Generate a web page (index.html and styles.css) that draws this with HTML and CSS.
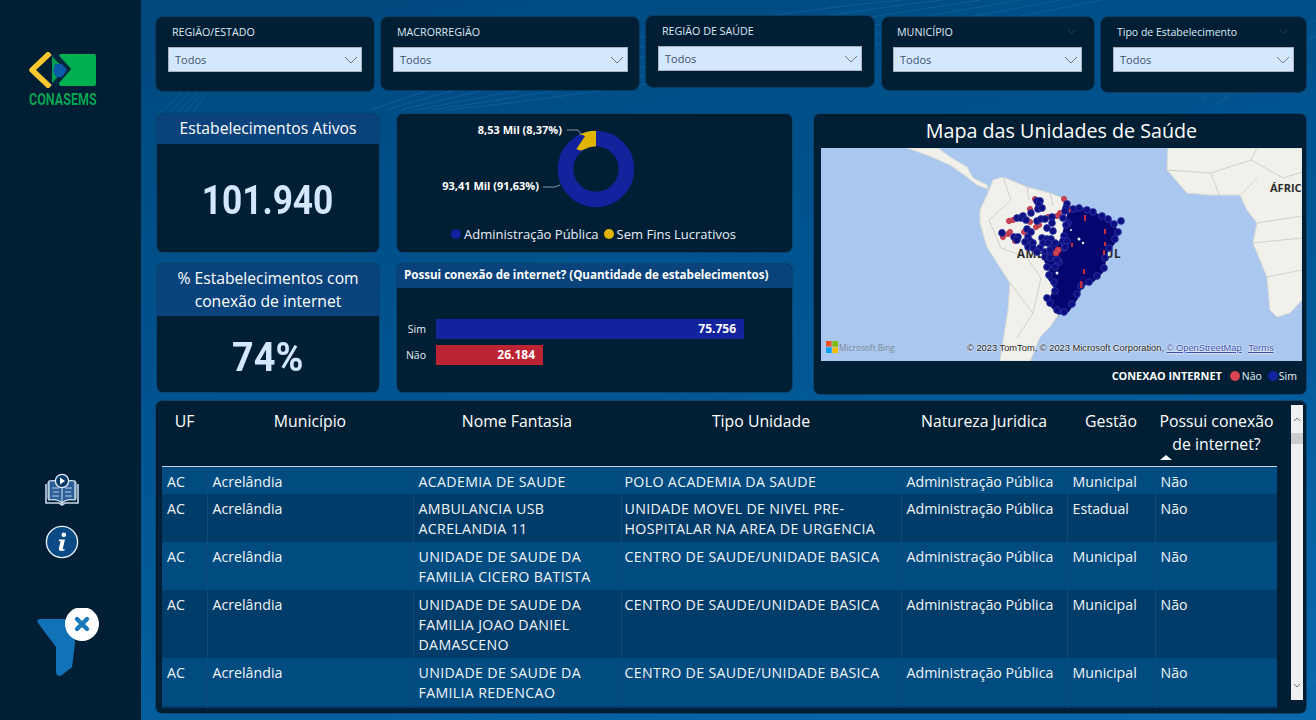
FILE: index.html
```html
<!DOCTYPE html>
<html lang="pt-BR">
<head>
<meta charset="utf-8">
<title>Painel CONASEMS</title>
<link rel="stylesheet" href="styles.css">
</head>
<body>
<svg class="defs" width="0" height="0" aria-hidden="true">
  <symbol id="chev" viewBox="0 0 14 8"><path d="M1 1l6 6 6-6" fill="none" stroke="currentColor" stroke-width="1"/></symbol>
</svg>
<div class="page">
  <aside class="side">
    <div class="logo">
      <svg class="logo-mark" width="68" height="36" viewBox="0 0 68 36">
        <path d="M30 4a2 2 0 0 1 2-2h33a2 2 0 0 1 2 2v28a2 2 0 0 1-2 2H32a2 2 0 0 1-2-2z" fill="#00b050"/>
        <path d="M21 1 3 18l18 17" fill="none" stroke="#fdc82f" stroke-width="5.500" stroke-linejoin="round"/>
        <path d="M23 4v29l14-14z" fill="#00a050"/>
        <path d="M24 1 39 17 24 34" fill="none" stroke="#00263f" stroke-width="5"/>
        <path d="M26 12l7 0 5 6-5 7-6 0-3-6z" fill="#0b5aa8"/>
      </svg>
      <div class="logo-name">CONASEMS</div>
    </div>
    <div class="side-actions">
      <svg width="34" height="34" viewBox="0 0 34 34">
        <path d="M3 9h7v17H3z M31 9h-7v17h7z" fill="#3a70a8" stroke="#c8d8ea" stroke-width="1"/>
        <path d="M1 11v19h13l3 2 3-2h13V11" fill="none" stroke="#c8d8ea" stroke-width="1.600"/>
        <path d="M4 8c5-1 10 0 13 3 3-3 8-4 13-3v19c-5-1-10 0-13 3-3-3-8-4-13-3z" fill="#2c5f98" stroke="#dbe7f3" stroke-width="1.200"/>
        <path d="M17 13v18" stroke="#dbe7f3" stroke-width="1"/>
        <path d="M7 15h7M8 19h6M7 23h7M20 15h7M20 19h6M20 23h7" stroke="#b9d0e8" stroke-width="1.200"/>
        <circle cx="17" cy="8" r="6.600" fill="#0a3a68" stroke="#e6eef7" stroke-width="1.300"/>
        <path d="M15 4.600l5 3.400-5 3.400z" fill="#fff"/>
      </svg>
      <svg class="info" width="34" height="34" viewBox="0 0 34 34">
        <circle cx="17" cy="17" r="15.600" fill="#0a4a86" stroke="#e8eef5" stroke-width="1.400"/>
        <circle cx="18.800" cy="9.800" r="2.300" fill="#fff"/>
        <path d="M14 14.500h6l-2.200 9c-.1.7.5.9 2 .4l-.2 1.300c-2.400 1.200-6.200 1.200-5.700-1.700l1.600-7.200-1.700-.4z" fill="#fff"/>
      </svg>
    </div>
    <div class="clear">
      <svg width="62" height="70" viewBox="0 0 62 70">
        <path d="M3 11H36L38 35 35 59 25 67Q21 70 19 65V39L1 15Q-1 11 3 11Z" fill="#1272b8"/>
        <circle cx="45" cy="16" r="17" fill="#fff"/>
        <path d="M40 11l10 10M50 11 40 21" stroke="#1a78bd" stroke-width="4.400" stroke-linecap="round"/>
      </svg>
    </div>
  </aside>

  <main class="main">
    <svg class="swirl" width="1175" height="720" viewBox="0 0 1175 720" aria-hidden="true">
      <g fill="none" stroke="#4c93c9" stroke-opacity=".22">
        <path d="M230 110C380 55 560 20 760 0"/><path d="M245 110C400 62 580 28 800 0"/>
        <path d="M260 110C420 70 600 36 840 0"/><path d="M275 110C440 78 620 44 880 0"/>
        <path d="M290 110C460 85 640 52 920 0"/><path d="M305 110C480 92 660 60 960 0"/>
        <path d="M1060 100C1100 70 1140 40 1175 20"/><path d="M1075 105C1110 78 1145 52 1175 36"/>
        <path d="M1120 720C1140 700 1160 690 1175 680"/>
        <path d="M20 112 42 92M28 112 50 92M36 112 58 92M44 112 62 93M52 112 66 93"/>
      </g>
    </svg>

    <section class="filters">
      <div class="filter f1"><div class="f-head"><span>REGIÃO/ESTADO</span></div><div class="select"><span>Todos</span><svg class="c-sel"><use href="#chev"/></svg></div></div>
      <div class="filter f2"><div class="f-head"><span>MACRORREGIÃO</span></div><div class="select"><span>Todos</span><svg class="c-sel"><use href="#chev"/></svg></div></div>
      <div class="filter f3"><div class="f-head"><span>REGIÃO DE SAÚDE</span></div><div class="select"><span>Todos</span><svg class="c-sel"><use href="#chev"/></svg></div></div>
      <div class="filter f4"><div class="f-head"><span>MUNICÍPIO</span><svg class="c-head"><use href="#chev"/></svg></div><div class="select"><span>Todos</span><svg class="c-sel"><use href="#chev"/></svg></div></div>
      <div class="filter f5"><div class="f-head"><span>Tipo de Estabelecimento</span><svg class="c-head"><use href="#chev"/></svg></div><div class="select"><span>Todos</span><svg class="c-sel"><use href="#chev"/></svg></div></div>
    </section>

    <section class="mid">
      <div class="card kpi">
        <h2 class="band">Estabelecimentos Ativos</h2>
        <div class="kpi-val"><span>101.940</span></div>
      </div>
      <div class="card donut">
        <svg class="donut-svg" width="397" height="105" viewBox="0 0 397 105">
          <circle cx="200" cy="55" r="30.500" fill="none" stroke="#12239e" stroke-width="15.500"/>
          <circle class="slice" cx="200" cy="55" r="30.500" pathLength="100" stroke-dasharray="8.370 91.630" fill="none" stroke="#e0b400" stroke-width="15.500" transform="rotate(-120.100 200 55)"/>
          <path d="M171 16h11l3 4M147 73h12l5-2" fill="none" stroke="#8a949e" stroke-width="1"/>
          <text class="dl" x="166" y="20" text-anchor="end">8,53 Mil (8,37%)</text>
          <text class="dl" x="143" y="76" text-anchor="end">93,41 Mil (91,63%)</text>
        </svg>
        <div class="donut-legend">
          <span class="dot dot-blue"></span><span>Administração Pública</span>
          <span class="dot dot-yellow"></span><span>Sem Fins Lucrativos</span>
        </div>
      </div>
      <div class="card map-card">
        <h2 class="map-title">Mapa das Unidades de Saúde</h2>
        <div class="map">
          <svg width="481" height="213" viewBox="0 0 481 213">
            <rect width="481" height="213" fill="#a9c7ef"/>
            <g fill="#f1f0ea" stroke="#dcdcd4" stroke-width="1">
              <path d="M86 0 106 7 129 17 146 29 156 37 167 41 166 37 152 30 146 19 129 9 117 0Z"/>
              <path d="M159 62 167 45 172 32 182 29 206 39 229 45 246 52 259 65 286 72 296 82 292 94 284 119 269 132 257 140 254 150 242 164 237 165 226 155 237 167 229 179 219 189 209 213H179L187 162 189 135 166 99 159 75Z"/>
              <path d="M347 0 346 22 366 45 389 47 419 47 426 62 436 75 432 95 446 129 449 162 456 169 469 165 481 152V0Z"/>
            </g>
            <g fill="none" stroke="#c8c8c0" stroke-width=".8">
              <path d="M182 29 190 52 168 72M206 39 208 52M229 45 232 58M168 72 180 100 206 110 220 130 212 165 196 190M189 135 212 165"/>
              <path d="M346 22 390 25 430 12 436 0M390 25 398 47M430 12 462 30 481 24M436 75 481 68M432 95 481 90M446 129 481 122M420 47 436 30"/>
            </g>
            <text class="m-lab" x="196" y="110">AMÉRICA DO SUL</text>
            <text class="m-lab m-af" x="449" y="44">ÁFRIC</text>
            <path d="M249 65 262 62 276 68 289 74 295 84 292 94 284 104 281 122 271 132 259 137 255 149 246 162 238 164 229 154 236 140 228 128 233 118 242 108 246 96 244 85Z" fill="#04056e" stroke="#04056e" stroke-width="5" stroke-linejoin="round"/>
            <path d="M223 109 230 98 249 90 252 119 231 126Z" fill="#04056e" stroke="#04056e" stroke-width="3" stroke-linejoin="round"/>
            <g class="blue">
              <circle cx="252" cy="61" r="3"/><circle cx="258" cy="60" r="3"/><circle cx="266" cy="62" r="3"/><circle cx="272" cy="64" r="3"/><circle cx="281" cy="68" r="3"/><circle cx="287" cy="71" r="3"/><circle cx="293" cy="76" r="3"/><circle cx="297" cy="84" r="3"/><circle cx="294" cy="91" r="3"/><circle cx="288" cy="100" r="3"/><circle cx="284" cy="110" r="3"/><circle cx="283" cy="120" r="3"/><circle cx="276" cy="128" r="3"/><circle cx="268" cy="134" r="3"/><circle cx="260" cy="138" r="3"/><circle cx="256" cy="146" r="3"/><circle cx="251" cy="156" r="3"/><circle cx="243" cy="164" r="3"/><circle cx="236" cy="162" r="3"/><circle cx="229" cy="155" r="3"/><circle cx="226" cy="150" r="3"/><circle cx="234" cy="143" r="3"/><circle cx="233" cy="134" r="3"/><circle cx="228" cy="127" r="3"/><circle cx="238" cy="114" r="3"/><circle cx="243" cy="100" r="3"/><circle cx="243" cy="88" r="3"/><circle cx="247" cy="75" r="3"/>
            </g>
            <g fill="#c62c3c">
              <rect x="263" y="67" width="2" height="6"/><rect x="283" y="81" width="2" height="5"/><rect x="262" y="121" width="2" height="5"/><rect x="259" y="133" width="2.500" height="7"/><rect x="283" y="94" width="2" height="4"/><rect x="250" y="95" width="2" height="4"/><rect x="282" y="102" width="2" height="5"/>
            </g>
            <g fill="#f1f0ea"><circle cx="258" cy="91" r="1.500"/><circle cx="262" cy="95" r="1.200"/><circle cx="236" cy="125" r="1.500"/><circle cx="250" cy="82" r="1"/></g>
            <g class="red">
              <circle cx="188" cy="73" r="2.500"/><circle cx="192" cy="72" r="2.500"/><circle cx="214" cy="51" r="2.500"/><circle cx="243" cy="51" r="2.500"/><circle cx="209" cy="61" r="2.500"/><circle cx="206" cy="72" r="2.500"/><circle cx="209" cy="74" r="2.500"/><circle cx="215" cy="79" r="2.500"/><circle cx="218" cy="77" r="2.500"/><circle cx="181" cy="84" r="2.500"/><circle cx="182" cy="89" r="2.500"/><circle cx="187" cy="86" r="2.500"/><circle cx="189" cy="84" r="2.500"/><circle cx="194" cy="93" r="2.500"/><circle cx="203" cy="84" r="2.500"/><circle cx="237" cy="102" r="3"/><circle cx="235" cy="105" r="3"/><circle cx="239" cy="65" r="2.500"/><circle cx="227" cy="69" r="2.500"/><circle cx="236" cy="68" r="2.500"/><circle cx="247" cy="62" r="2.500"/>
            </g>
            <g class="blue">
              <circle cx="181" cy="85" r="3"/><circle cx="196" cy="70" r="3"/><circle cx="200" cy="70" r="3"/><circle cx="202" cy="68" r="3"/><circle cx="205" cy="72" r="3"/><circle cx="210" cy="65" r="3"/><circle cx="216" cy="53" r="3"/><circle cx="219" cy="53" r="3"/><circle cx="218" cy="57" r="3"/><circle cx="217" cy="61" r="3"/><circle cx="221" cy="60" r="3"/><circle cx="246" cy="56" r="3"/><circle cx="245" cy="60" r="3"/><circle cx="244" cy="63" r="3"/><circle cx="216" cy="73" r="3"/><circle cx="220" cy="71" r="3"/><circle cx="224" cy="71" r="3"/><circle cx="231" cy="69" r="3"/><circle cx="231" cy="75" r="3"/><circle cx="226" cy="80" r="3"/><circle cx="232" cy="83" r="2.500"/><circle cx="206" cy="81" r="3"/><circle cx="210" cy="84" r="3"/><circle cx="193" cy="89" r="3"/><circle cx="197" cy="89" r="3"/><circle cx="196" cy="92" r="3"/><circle cx="207" cy="89" r="3"/><circle cx="209" cy="93" r="3"/><circle cx="204" cy="94" r="3"/><circle cx="212" cy="95" r="3"/><circle cx="207" cy="99" r="3"/><circle cx="221" cy="90" r="3"/><circle cx="226" cy="91" r="3"/><circle cx="230" cy="91" r="3"/><circle cx="222" cy="95" r="3"/><circle cx="227" cy="95" r="3"/><circle cx="234" cy="95" r="3"/><circle cx="219" cy="100" r="3"/><circle cx="224" cy="104" r="3"/><circle cx="229" cy="102" r="3"/><circle cx="224" cy="109" r="3"/><circle cx="229" cy="110" r="3"/><circle cx="236" cy="112" r="3"/><circle cx="226" cy="119" r="3"/><circle cx="234" cy="119" r="3"/><circle cx="242" cy="93" r="3"/><circle cx="246" cy="93" r="3"/><circle cx="244" cy="99" r="3"/><circle cx="300" cy="73" r="2.500"/><circle cx="242" cy="70" r="3"/><circle cx="245" cy="77" r="3"/><circle cx="212" cy="100" r="3"/><circle cx="216" cy="104" r="3"/>
            </g>
          </svg>
          <div class="bing"><svg width="12" height="12" viewBox="0 0 12 12"><rect width="5.600" height="5.600" fill="#f25022"/><rect x="6.400" width="5.600" height="5.600" fill="#7fba00"/><rect y="6.400" width="5.600" height="5.600" fill="#00a4ef"/><rect x="6.400" y="6.400" width="5.600" height="5.600" fill="#ffb900"/></svg><span>Microsoft Bing</span></div>
          <div class="attr">© 2023 TomTom, © 2023 Microsoft Corporation, <u>© OpenStreetMap</u> <u class="terms">Terms</u></div>
        </div>
        <div class="map-legend">
          <b>CONEXAO INTERNET</b>
          <span class="dot dot-red"></span><span>Não</span>
          <span class="dot dot-blue"></span><span>Sim</span>
        </div>
      </div>
      <div class="card kpi kpi2">
        <h2 class="band">% Estabelecimentos com conexão de internet</h2>
        <div class="kpi-val"><span>74%</span></div>
      </div>
      <div class="card bars">
        <h3 class="bars-title">Possui conexão de internet? (Quantidade de estabelecimentos)</h3>
        <div class="bars-body">
          <div class="bar-row"><span class="bar-lab">Sim</span><div class="bar bar-blue" style="width:308px">75.756</div></div>
          <div class="bar-row"><span class="bar-lab">Não</span><div class="bar bar-red" style="width:107px">26.184</div></div>
        </div>
      </div>
    </section>

    <section class="card tbl-card">
      <div class="tbl-wrap">
        <table>
          <colgroup><col class="c1"><col class="c2"><col class="c3"><col class="c4"><col class="c5"><col class="c6"><col class="c7"></colgroup>
          <thead>
            <tr><th>UF</th><th>Município</th><th>Nome Fantasia</th><th>Tipo Unidade</th><th>Natureza Juridica</th><th>Gestão</th><th class="sorted">Possui conexão de internet?<i class="sort"></i></th></tr>
          </thead>
          <tbody>
            <tr class="r27"><td>AC</td><td>Acrelândia</td><td class="up">ACADEMIA DE SAUDE</td><td class="up">POLO ACADEMIA DA SAUDE</td><td>Administração Pública</td><td>Municipal</td><td>Não</td></tr>
            <tr><td>AC</td><td>Acrelândia</td><td class="up">AMBULANCIA USB ACRELANDIA 11</td><td class="up">UNIDADE MOVEL DE NIVEL PRE-HOSPITALAR NA AREA DE URGENCIA</td><td>Administração Pública</td><td>Estadual</td><td>Não</td></tr>
            <tr><td>AC</td><td>Acrelândia</td><td class="up">UNIDADE DE SAUDE DA FAMILIA CICERO BATISTA</td><td class="up">CENTRO DE SAUDE/UNIDADE BASICA</td><td>Administração Pública</td><td>Municipal</td><td>Não</td></tr>
            <tr><td>AC</td><td>Acrelândia</td><td class="up">UNIDADE DE SAUDE DA FAMILIA JOAO DANIEL DAMASCENO</td><td class="up">CENTRO DE SAUDE/UNIDADE BASICA</td><td>Administração Pública</td><td>Municipal</td><td>Não</td></tr>
            <tr><td>AC</td><td>Acrelândia</td><td class="up">UNIDADE DE SAUDE DA FAMILIA REDENCAO</td><td class="up">CENTRO DE SAUDE/UNIDADE BASICA</td><td>Administração Pública</td><td>Municipal</td><td>Não</td></tr>
            <tr class="sliver"><td></td><td></td><td></td><td></td><td></td><td></td><td></td></tr>
          </tbody>
        </table>
      </div>
      <div class="scroll">
        <svg class="sc-arrow" width="8" height="5" viewBox="0 0 8 5"><path d="M1 4l3-3 3 3" fill="none" stroke="#777" stroke-width="1"/></svg>
        <div class="thumb"></div>
        <svg class="sc-arrow sc-down" width="8" height="5" viewBox="0 0 8 5"><path d="M1 1l3 3 3-3" fill="none" stroke="#777" stroke-width="1"/></svg>
      </div>
    </section>
  </main>
</div>
</body>
</html>
```

FILE: styles.css
```css
* { box-sizing: border-box; }
html, body { margin: 0; padding: 0; height: 720px; overflow: hidden; }
body { font-family: "Open Sans", "Noto Sans", sans-serif; color: #fff; background: #002038; }
h2, h3 { margin: 0; font-weight: 400; }
.defs { position: absolute; }

.page { display: flex; width: 1316px; height: 720px; }

/* sidebar */
.side { width: 141px; flex: none; background: #001f35; display: flex; flex-direction: column; align-items: flex-start; }
.logo { margin: 52px 0 0 29px; }
.logo-mark { display: block; }
.logo-name { font-family: "Roboto", sans-serif; font-weight: 700; font-size: 16.500px; line-height: 17px; color: #00a651; margin-top: 3px; white-space: nowrap; transform: scaleX(.76); transform-origin: left center; }
.side-actions { display: flex; flex-direction: column; gap: 18px; margin: 365px 0 0 45px; }
.side-actions svg { display: block; }
.clear { margin: 49px 0 0 37px; }
.clear svg { display: block; }

/* main */
.main { position: relative; flex: 1; min-width: 0; padding: 16px 9px 0 14px; background: linear-gradient(165deg, #00487d 0%, #005591 45%, #0a68ad 100%); }
.swirl { position: absolute; left: 0; top: 0; pointer-events: none; }
.filters, .mid, .tbl-card { position: relative; }

.filters { display: flex; align-items: flex-start; gap: 5px; height: 77px; }
.filter { background: #001f35; border-radius: 8px; border: 1px solid #0a3d66; padding: 0 12px; font-size: 10.700px; }
.f-head { display: flex; justify-content: space-between; align-items: center; height: 30px; padding: 0 4px 1px; color: #dfeaf5; }
.select { display: flex; justify-content: space-between; align-items: center; height: 25px; background: #d3e8fd; border: 1px solid #a9b2bd; padding: 0 3px 0 6px; color: #3f5270; font-size: 11px; }
.c-sel { width: 14px; height: 8px; color: #68788e; }
.c-head { width: 9px; height: 5px; margin-right: 2px; color: #44566a; }
.f1 { width: 220px; height: 76px; }
.f2 { width: 260px; height: 75px; padding-right: 11px; }
.f3 { width: 230px; height: 73px; margin-top: -1px; }
.f4 { width: 214px; height: 75px; margin-left: 1px; padding-left: 11px; }
.f5 { width: 207px; height: 77px; font-size: 10.500px; }

.mid { display: grid; grid-template-columns: 224px 397px 498px; grid-template-rows: 140px 132px; column-gap: 16px; row-gap: 10px; margin: 20px 0 0 1px; width: 1151px; }
.card { background: #001f35; border: 1px solid #0c4470; border-radius: 7px; overflow: hidden; }

/* KPI */
.kpi { display: flex; flex-direction: column; }
.band { background: #0a437c; color: #fff; font-size: 15.700px; line-height: 23px; text-align: center; padding: 3px 8px 4px; }
.kpi-val { flex: 1; display: flex; align-items: center; justify-content: center; padding-top: 4px; font-family: "Roboto", sans-serif; font-weight: 700; font-size: 41px; color: #d3e8fd; }
.kpi-val span { display: block; transform: scaleX(.86); }
.kpi2 { height: 130px; }
.kpi2 .band { padding: 3px 20px 3px; }
.kpi2 .kpi-val { padding-top: 6px; }
.kpi2 .kpi-val span { transform: scaleX(.92); }

/* donut */
.donut { display: flex; flex-direction: column; }
.donut-svg { display: block; margin-left: -1px; }
.dl { font-size: 11px; font-weight: 700; fill: #fff; }
.donut-legend { display: flex; justify-content: center; align-items: center; font-size: 13px; color: #e8f0f8; margin-top: 6px; margin-left: -2px; white-space: nowrap; }
.dot { display: inline-block; width: 10px; height: 10px; border-radius: 50%; flex: none; }
.dot-blue { background: #12239e; margin-right: 3px; }
.dot-yellow { background: #e0b400; margin: 0 3px 0 5px; }
.dot-red { background: #d64550; margin: 0 2px 0 8px; }

/* map */
.map-card { grid-column: 3; grid-row: 1 / span 2; margin-left: 4px; padding: 0 4px 0 7px; }
.map-title { font-size: 19.700px; line-height: 34px; text-align: center; color: #fff; }
.map { position: relative; height: 213px; overflow: hidden; }
.map > svg { display: block; }
.map-legend { display: flex; justify-content: flex-end; align-items: center; font-size: 10.500px; height: 29px; padding-right: 5px; color: #e8f0f8; white-space: nowrap; }
.map-legend b { font-size: 10.900px; color: #fff; }
.map-legend .dot-blue { margin: 0 1px 0 6px; }
.m-lab { font-family: "Open Sans", sans-serif; font-weight: 700; font-size: 11.500px; fill: #2b2b2b; letter-spacing: .5px; }
.m-af { letter-spacing: 0; font-size: 11px; }
.red circle { fill: #c8475a; stroke: #c22c3c; stroke-width: 1; }
.blue circle { r: 3.400px; fill: #0e0e80; stroke: #2a3aa8; stroke-width: .8; }
.bing { position: absolute; left: 5px; top: 193px; display: flex; align-items: center; gap: 1px; font-size: 8.300px; color: #7f8791; }
.attr { position: absolute; left: 146px; top: 195px; font-family: "Liberation Sans", sans-serif; font-size: 9.300px; color: #222; white-space: nowrap; text-shadow: 0 0 2px #fff, 0 0 2px #fff; }
.attr u { color: #3a4fb0; }
.terms { margin-left: 4px; }

/* bars */
.bars { grid-column: 2; grid-row: 2; height: 130px; }
.bars-title { background: #0a437c; font-size: 11.600px; font-weight: 700; line-height: 21px; padding: 0 7px 3px; white-space: nowrap; }
.bars-body { display: flex; flex-direction: column; gap: 6px; padding-top: 31px; }
.bar-row { display: flex; align-items: center; gap: 10px; font-size: 10.500px; }
.bar-lab { width: 29px; text-align: right; color: #e8f0f8; }
.bar { height: 20px; line-height: 20px; text-align: right; padding-right: 8px; font-size: 12px; font-weight: 700; }
.bar-blue { background: #12239e; }
.bar-red { background: #bc2433; }

/* table */
.tbl-card { display: flex; align-items: flex-start; gap: 14px; width: 1152px; height: 314px; margin-top: 5px; padding: 4px 3px 0 6px; }
.tbl-wrap { width: 1116px; height: 303px; overflow: hidden; }
table { border-collapse: collapse; table-layout: fixed; width: 1116px; font-size: 14.200px; line-height: 20.400px; }
.c1 { width: 45px; } .c2 { width: 206px; } .c3 { width: 208px; } .c4 { width: 280px; } .c5 { width: 166px; } .c6 { width: 88px; } .c7 { width: 123px; }
th { font-weight: 400; font-size: 15.800px; line-height: 23px; height: 61px; vertical-align: top; padding: 5px 2px 0; text-align: center; border-bottom: 1px solid #c9d3dc; position: relative; }
.sort { position: absolute; left: 5px; bottom: 6px; width: 0; height: 0; border-left: 6px solid transparent; border-right: 6px solid transparent; border-bottom: 5px solid #fff; }
td { vertical-align: top; padding: 5px 5px 2px; border-left: 1px solid #0d4a7e; color: #f2f6fa; }
td:first-child { border-left: 0; }
td:nth-child(4) { padding-left: 3px; }
td.up { letter-spacing: .33px; }
tbody tr:nth-child(odd) { background: #004b80; }
tbody tr:nth-child(even) { background: #003c69; }
.r27 td { height: 27px; }
.sliver td { height: 10px; padding: 0; }

.scroll { position: relative; flex: none; width: 12px; height: 295px; background: #f0f0f0; }
.thumb { position: absolute; top: 28px; left: 0; width: 12px; height: 11px; background: #cdcdcd; }
.sc-arrow { position: absolute; left: 2px; top: 12px; }
.sc-down { top: auto; bottom: 12px; }
```
